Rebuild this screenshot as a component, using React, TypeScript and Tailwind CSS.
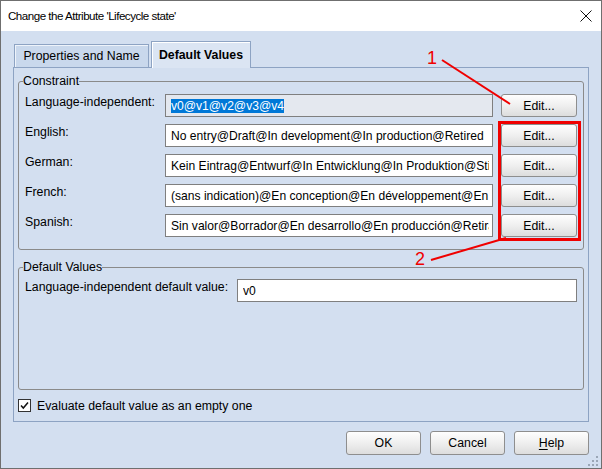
import React from 'react';

interface ConstraintRow {
  label: string;
  value: string;
  selected?: boolean;
}

const rows: ConstraintRow[] = [
  { label: 'Language-independent:', value: 'v0@v1@v2@v3@v4', selected: true },
  { label: 'English:', value: 'No entry@Draft@In development@In production@Retired' },
  { label: 'German:', value: 'Kein Eintrag@Entwurf@In Entwicklung@In Produktion@Stillgelegt' },
  { label: 'French:', value: '(sans indication)@En conception@En développement@En production@Retiré' },
  { label: 'Spanish:', value: 'Sin valor@Borrador@En desarrollo@En producción@Retirado' },
];

function SwingButton({ children, className = '' }: { children: React.ReactNode; className?: string }) {
  return (
    <div
      className={`flex items-center justify-center rounded-[3px] border border-[#8e8e8e] bg-linear-to-b from-[#fefefe] via-[#efefef] to-[#dddddd] text-[12.3px] leading-[14px] text-black ${className}`}
    >
      {children}
    </div>
  );
}

function TextField({ value, selected, className = '' }: { value: string; selected?: boolean; className?: string }) {
  return (
    <div
      className={`h-[23px] border border-[#7f7f7f] pl-[5px] pr-[3px] pt-[4px] ${
        selected ? 'bg-[#e4e8ef]' : 'bg-white'
      } ${className}`}
    >
      <div className="overflow-hidden whitespace-nowrap text-[12.1px] leading-[14px] text-black">
        {selected ? <span className="bg-[#0078d7] text-white">{value}</span> : value}
      </div>
    </div>
  );
}

export default function App() {
  return (
    <div className="relative h-[469px] w-[602px] font-['Liberation_Sans',Arial,sans-serif] text-[12.3px] text-black">
      <div className="flex h-full w-full flex-col border border-[#6f6f6f]">
        {/* title bar */}
        <div className="flex h-[30px] items-center justify-between bg-white pl-[7px] pr-[9px]">
          <span className="text-[11.6px] leading-[14px] tracking-[-0.5px]">
            Change the Attribute 'Lifecycle state'
          </span>
          <svg width="12" height="12" viewBox="0 0 12 12">
            <path d="M0.5 0.5 L11.5 11.5 M11.5 0.5 L0.5 11.5" stroke="#111" strokeWidth="1" />
          </svg>
        </div>

        {/* dialog body */}
        <div className="flex flex-1 flex-col bg-[#d3dff0] px-[12px] pt-[10px]">
          {/* tabs */}
          <div className="flex h-[26px] items-end pl-[1px]">
            <div className="flex h-[23px] w-[135px] items-center justify-center border-l border-r border-t border-[#8da3c3] bg-[#c9d8ec] leading-[14px] shadow-[inset_1px_1px_0_#eef3fa]">
              Properties and Name
            </div>
            <div className="relative z-10 -mb-px ml-[2px] flex h-[27px] w-[100px] items-center justify-center border-l border-r border-t border-[#8da3c3] bg-[#dbe5f3] font-bold leading-[14px] shadow-[inset_1px_1px_0_#ffffff]">
              Default Values
            </div>
          </div>

          {/* tab panel */}
          <div className="flex h-[355px] w-[576px] flex-col border border-[#8da3c3] px-[4px] pt-[6px]">
            <fieldset className="rounded-[3px] border border-[#8a8a8a] pb-[12px]">
              <legend className="ml-[4px] leading-[14px]">Constraint</legend>
              <div className="flex flex-col gap-[7px] pl-[6px] pr-[6px] pt-[6px]">
                {rows.map((row) => (
                  <div key={row.label} className="flex items-start">
                    <div className="w-[140px] pt-[1px] leading-[14px]">{row.label}</div>
                    <TextField value={row.value} selected={row.selected} className="w-[328px]" />
                    <SwingButton className="ml-[8px] h-[23px] w-[76px]">Edit...</SwingButton>
                  </div>
                ))}
              </div>
            </fieldset>

            <fieldset className="mt-[10px] h-[130px] rounded-[3px] border border-[#8a8a8a]">
              <legend className="ml-[4px] leading-[14px]">Default Values</legend>
              <div className="flex items-start pl-[6px] pr-[6px] pt-[5px]">
                <div className="w-[212px] pt-[1px] leading-[14px]">Language-independent default value:</div>
                <TextField value="v0" className="w-[340px]" />
              </div>
            </fieldset>

            <div className="mt-[9px] flex items-start">
              <div className="flex h-[13px] w-[13px] items-center justify-center border border-[#333333] bg-white">
                <svg width="9" height="9" viewBox="0 0 9 9">
                  <path d="M1 4.5 L3.3 7 L8 1.5" fill="none" stroke="#111" strokeWidth="1.5" />
                </svg>
              </div>
              <span className="ml-[6px] leading-[14px]">Evaluate default value as an empty one</span>
            </div>
          </div>

          {/* dialog buttons */}
          <div className="mt-[9px] flex justify-end gap-[9px]">
            <SwingButton className="h-[24px] w-[75px]">OK</SwingButton>
            <SwingButton className="h-[24px] w-[75px]">Cancel</SwingButton>
            <SwingButton className="h-[24px] w-[75px]">
              <span className="underline underline-offset-2">H</span>elp
            </SwingButton>
          </div>
        </div>
      </div>

      {/* annotations + resize grip */}
      <svg className="pointer-events-none absolute left-0 top-0" width="602" height="469" viewBox="0 0 602 469">
        <text x="427" y="64" fill="#f00000" fontSize="18" fontFamily="Liberation Sans, Arial, sans-serif">1</text>
        <line x1="442" y1="60" x2="510" y2="104" stroke="#f00000" strokeWidth="2" />
        <rect x="499.5" y="122.5" width="80" height="117" fill="none" stroke="#f00000" strokeWidth="3" />
        <text x="415" y="265" fill="#f00000" fontSize="18" fontFamily="Liberation Sans, Arial, sans-serif">2</text>
        <line x1="431" y1="260" x2="506" y2="238" stroke="#f00000" strokeWidth="2" />
        <g fill="#9aa6b6">
          <rect x="596" y="456" width="2" height="2" />
          <rect x="592" y="460" width="2" height="2" />
          <rect x="596" y="460" width="2" height="2" />
          <rect x="588" y="464" width="2" height="2" />
          <rect x="592" y="464" width="2" height="2" />
          <rect x="596" y="464" width="2" height="2" />
        </g>
      </svg>
    </div>
  );
}
